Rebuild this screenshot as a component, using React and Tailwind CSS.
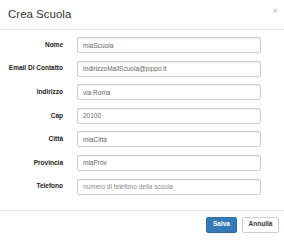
import React from 'react';

const fields = [
  { label: 'Nome', value: 'miaScuola' },
  { label: 'Email Di Contatto', value: 'IndirizzoMailScuola@pippo.it' },
  { label: 'Indirizzo', value: 'via Roma' },
  { label: 'Cap', value: '20100' },
  { label: 'Città', value: 'miaCittà' },
  { label: 'Provincia', value: 'miaProv' },
  { label: 'Telefono', value: '', placeholder: 'numero di telefono della scuola' },
];

const App = () => {
  return (
    <div className="w-[284px] h-[240px] bg-white text-[#333] font-['Liberation_Sans',Arial,sans-serif] overflow-hidden">
      {/* Header */}
      <div className="h-[30px] flex items-center justify-between pl-[8px] pr-[6px] border-b border-[#e5e5e5]">
        <h4 className="text-[11.5px] leading-none text-[#333]">Crea Scuola</h4>
        <button className="text-[9px] leading-none font-bold text-[#c8c8c8] -mt-[6px]">×</button>
      </div>

      {/* Body */}
      <div className="pt-[7px] flex flex-col gap-[7.6px]">
        {fields.map((f) => (
          <div key={f.label} className="flex items-center h-[16px]">
            <label className="w-[63px] text-right text-[6.5px] font-bold leading-none text-[#222]">{f.label}</label>
            <input
              readOnly
              value={f.value}
              placeholder={f.placeholder}
              className="ml-[14px] w-[184px] h-[16px] px-[5px] border border-[#ccc] rounded-[2px] text-[6.5px] text-[#666] placeholder:text-[#888] shadow-[inset_0_1px_1px_rgba(0,0,0,0.075)] outline-none"
            />
          </div>
        ))}
      </div>

      {/* Footer */}
      <div className="mt-[15px] border-t border-[#e5e5e5] pt-[6px] pr-[5px] flex justify-end gap-[5px]">
        <button className="w-[31px] h-[16px] rounded-[2px] bg-[#337ab7] border border-[#2e6da4] text-white text-[6.5px] font-bold leading-none">
          Salva
        </button>
        <button className="w-[37px] h-[16px] rounded-[2px] bg-white border border-[#ccc] text-[#333] text-[6.5px] font-bold leading-none">
          Annulla
        </button>
      </div>
    </div>
  );
};

export default App;
